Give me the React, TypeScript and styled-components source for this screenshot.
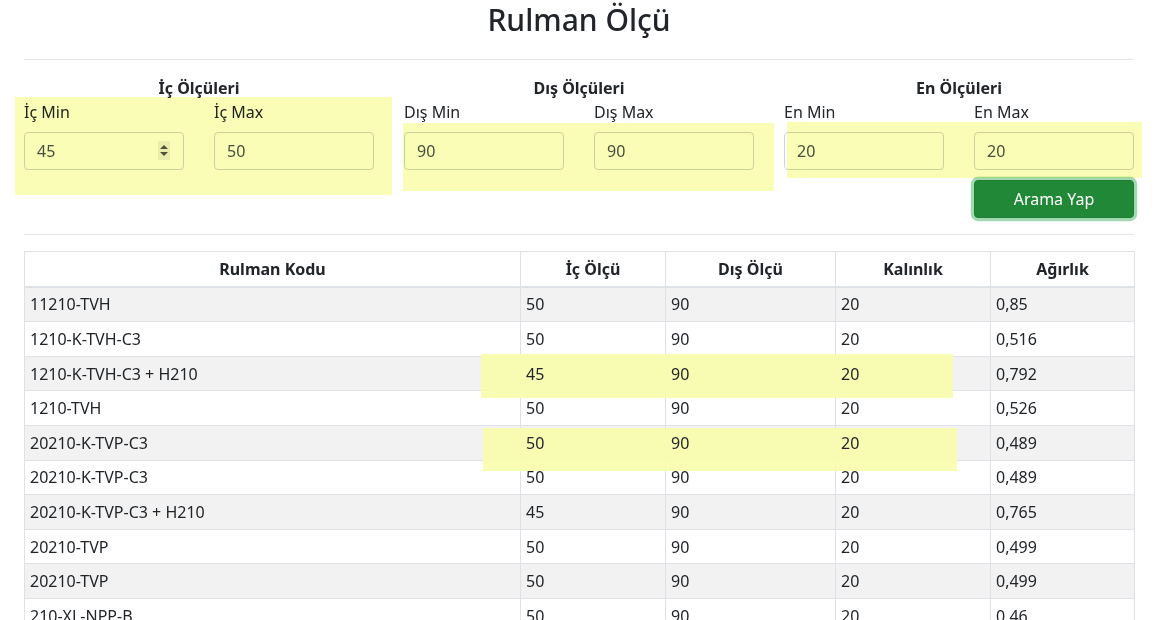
import React from "react";
import styled, { createGlobalStyle } from "styled-components";

const GlobalStyle = createGlobalStyle`
  html, body { margin: 0; padding: 0; overflow: hidden; background: #fff; }
  body {
    font-family: "Noto Sans", "Open Sans", "Liberation Sans", sans-serif;
    font-size: 16px;
    line-height: 24px;
    color: #212529;
  }
  * { box-sizing: border-box; }
`;

const Page = styled.div`
  position: relative;
  width: 1161px;
  min-height: 620px;
`;

const Container = styled.div`
  width: 1110px;
  margin-left: 24px;
`;

const Title = styled.h1`
  margin: 0;
  padding: 2px 0 5px;
  font-size: 30px;
  line-height: 36px;
  font-weight: 500;
  text-align: center;
  color: #212529;
`;

const Divider = styled.hr`
  margin: 16px 0;
  border: 0;
  border-top: 1px solid rgba(0, 0, 0, 0.1);
`;

const FilterRow = styled.div`
  display: grid;
  grid-template-columns: repeat(3, 350px);
  column-gap: 30px;
`;

const FilterGroup = styled.div`
  display: flex;
  flex-direction: column;
`;

const GroupTitle = styled.div`
  font-weight: 700;
  text-align: center;
  line-height: 24px;
`;

const FieldPair = styled.div`
  display: grid;
  grid-template-columns: 160px 160px;
  column-gap: 30px;
`;

const Field = styled.div`
  position: relative;
  display: flex;
  flex-direction: column;
`;

const Label = styled.label`
  line-height: 24px;
  margin-bottom: 8px;
  color: #212529;
`;

const Input = styled.input`
  height: 38px;
  width: 100%;
  padding: 6px 12px;
  border: 1px solid #ced4da;
  border-radius: 4px;
  font-family: inherit;
  font-size: 16px;
  line-height: 24px;
  color: #495057;
  background: #fff;
  outline: none;
`;

const Spinner = styled.div`
  position: absolute;
  right: 14px;
  bottom: 10px;
  width: 12px;
  height: 19px;
  background: #f0f0f0;
  display: flex;
  align-items: center;
  justify-content: center;
`;

const ButtonRow = styled.div`
  display: flex;
  justify-content: flex-end;
  margin-top: 10px;
`;

const SearchButton = styled.button`
  width: 160px;
  height: 38px;
  border: 1px solid #1e7e34;
  border-radius: 4px;
  background: #218838;
  color: #fff;
  font-family: inherit;
  font-size: 16px;
  line-height: 24px;
  box-shadow: 0 0 0 3.2px rgba(72, 180, 97, 0.5);
  cursor: pointer;
`;

const Table = styled.table`
  width: 1110px;
  border-collapse: collapse;
  table-layout: fixed;
  border: 1px solid #dee2e6;
`;

const Th = styled.th`
  padding: 4.8px;
  font-weight: 700;
  text-align: center;
  border: 1px solid #dee2e6;
  border-bottom: 2px solid #dee2e6;
  line-height: 24px;
`;

const Row = styled.tr<{ $striped: boolean }>`
  background: ${(p) => (p.$striped ? "#f2f2f2" : "#fff")};
`;

const Td = styled.td`
  padding: 4.8px 5px;
  border: 1px solid #dee2e6;
  line-height: 24px;
  white-space: nowrap;
  overflow: hidden;
`;

const CellText = styled.span`
  position: relative;
  z-index: 2;
`;

const Highlight = styled.div<{ $mode: "form" | "table" }>`
  position: absolute;
  z-index: 1;
  pointer-events: none;
  background: ${(p) =>
    p.$mode === "form" ? "#f9fdb6" : "rgba(249, 252, 172, 0.92)"};
  mix-blend-mode: ${(p) => (p.$mode === "form" ? "multiply" : "normal")};
`;

const groups = [
  { title: "İç Ölçüleri", fields: [["İç Min", "45"], ["İç Max", "50"]] },
  { title: "Dış Ölçüleri", fields: [["Dış Min", "90"], ["Dış Max", "90"]] },
  { title: "En Ölçüleri", fields: [["En Min", "20"], ["En Max", "20"]] },
];

const rows: [string, string, string, string, string][] = [
  ["11210-TVH", "50", "90", "20", "0,85"],
  ["1210-K-TVH-C3", "50", "90", "20", "0,516"],
  ["1210-K-TVH-C3 + H210", "45", "90", "20", "0,792"],
  ["1210-TVH", "50", "90", "20", "0,526"],
  ["20210-K-TVP-C3", "50", "90", "20", "0,489"],
  ["20210-K-TVP-C3", "50", "90", "20", "0,489"],
  ["20210-K-TVP-C3 + H210", "45", "90", "20", "0,765"],
  ["20210-TVP", "50", "90", "20", "0,499"],
  ["20210-TVP", "50", "90", "20", "0,499"],
  ["210-XL-NPP-B", "50", "90", "20", "0,46"],
  ["210-XL-NPP-B", "50", "90", "20", "0,46"],
];

const highlights: { mode: "form" | "table"; left: number; top: number; width: number; height: number }[] = [
  { mode: "form", left: 15, top: 97, width: 377, height: 98 },
  { mode: "form", left: 403, top: 123, width: 371, height: 68 },
  { mode: "form", left: 787, top: 122, width: 355, height: 56 },
  { mode: "table", left: 481, top: 354, width: 472, height: 44 },
  { mode: "table", left: 483, top: 428, width: 474, height: 43 },
];

const colWidths = [496, 145, 170, 155, 144];

export default function App() {
  return (
    <Page>
      <GlobalStyle />
      <Container>
        <Title>Rulman Ölçü</Title>
        <Divider />
        <FilterRow>
          {groups.map((g, gi) => (
            <FilterGroup key={g.title}>
              <GroupTitle>{g.title}</GroupTitle>
              <FieldPair>
                {g.fields.map(([label, value], fi) => (
                  <Field key={label}>
                    <Label>{label}</Label>
                    <Input type="text" value={value} readOnly />
                    {gi === 0 && fi === 0 && (
                      <Spinner>
                        <svg width="10" height="15" viewBox="0 0 10 15">
                          <path d="M1 6 L5 2 L9 6 Z" fill="#505050" />
                          <path d="M1 9 L5 13 L9 9 Z" fill="#505050" />
                        </svg>
                      </Spinner>
                    )}
                  </Field>
                ))}
              </FieldPair>
              {gi === 2 && (
                <ButtonRow>
                  <SearchButton>Arama Yap</SearchButton>
                </ButtonRow>
              )}
            </FilterGroup>
          ))}
        </FilterRow>
        <Divider />
        <Table>
          <colgroup>
            {colWidths.map((w, i) => (
              <col key={i} style={{ width: w }} />
            ))}
          </colgroup>
          <thead>
            <tr>
              <Th>Rulman Kodu</Th>
              <Th>İç Ölçü</Th>
              <Th>Dış Ölçü</Th>
              <Th>Kalınlık</Th>
              <Th>Ağırlık</Th>
            </tr>
          </thead>
          <tbody>
            {rows.map((r, i) => (
              <Row key={i} $striped={i % 2 === 0}>
                {r.map((c, j) => (
                  <Td key={j}>
                    <CellText>{c}</CellText>
                  </Td>
                ))}
              </Row>
            ))}
          </tbody>
        </Table>
      </Container>
      {highlights.map(({ mode, ...h }, i) => (
        <Highlight key={i} $mode={mode} style={h} />
      ))}
    </Page>
  );
}
